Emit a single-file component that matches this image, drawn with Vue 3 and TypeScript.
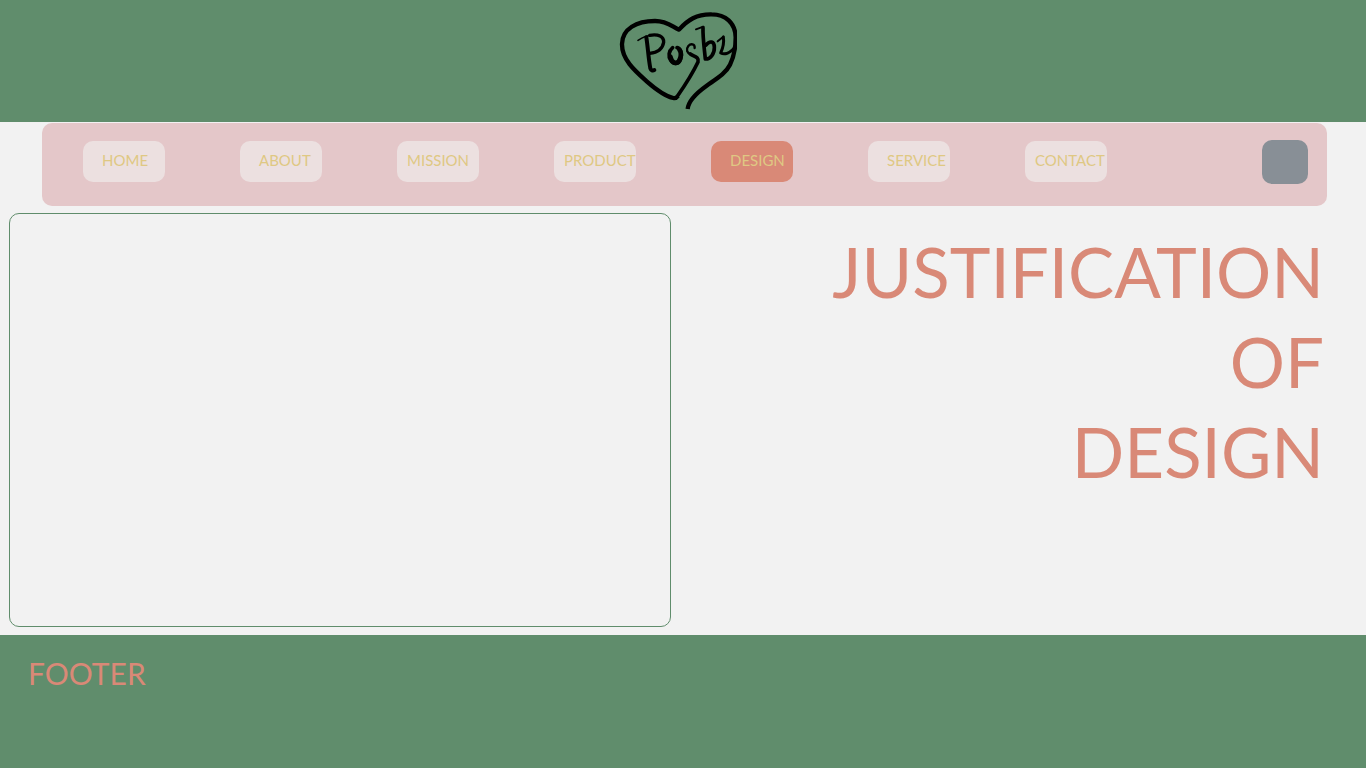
<script setup lang="ts">
interface NavItem {
  label: string
  href: string
  inset: 'near' | 'far'
  active?: boolean
}

const items: NavItem[] = [
  { label: 'HOME', href: '#home', inset: 'far' },
  { label: 'ABOUT', href: '#about', inset: 'far' },
  { label: 'MISSION', href: '#mission', inset: 'near' },
  { label: 'PRODUCT', href: '#product', inset: 'near' },
  { label: 'DESIGN', href: '#design', inset: 'far', active: true },
  { label: 'SERVICE', href: '#service', inset: 'far' },
  { label: 'CONTACT', href: '#contact', inset: 'near' },
]

const titleLines: string[] = ['JUSTIFICATION', 'OF', 'DESIGN']
</script>

<template>
  <div class="page">
    <header class="banner">
      <svg class="logo" viewBox="27 27 354 306" role="img" aria-label="Posbz">
        <g fill="none" stroke="#000" stroke-linecap="round" stroke-linejoin="round">
          <path
            stroke-width="13" stroke-linecap="butt"
            d="M233 327C235 300 262 277 290 257C320 236 346 222 360 194C372 170 377 147 377 112C376 68 346 43 305 43C260 42 233 60 207 89C188 82 174 63 135 63C80 63 37 86 36 132C35 178 74 212 110 244C142 272 171 290 190 294Q198 296 204 288"
          />
          <path stroke-width="11" d="M202 289C222 260 248 220 264 186C268 170 252 170 241 162" />
          <path stroke-width="7" d="M254 144C255 131 242 130 235 138C227 148 231 160 243 163" />
          <path stroke-width="5" d="M84 121C98 112 113 106 129 105" />
          <path stroke-width="10" d="M119 106C145 101 162 110 161 127C158 146 142 158 119 160" />
          <path stroke-width="12" d="M109 112C114 143 115 174 121 205C123 211 128 213 133 210" />
          <path stroke-width="11" d="M188 143C176 153 174 169 182 181C191 195 206 193 212 177C218 161 212 145 201 143" />
          <path stroke-width="14" d="M181 170C187 194 205 194 211 174C214 163 212 154 208 149" />
          <path stroke-width="6" d="M258 88L280 80" />
          <path stroke-width="11" d="M279 83C278 113 283 146 286 177C300 178 314 162 313 142C313 124 300 120 287 136" />
          <path stroke-width="6" d="M323 124L340 110" />
          <path stroke-width="9" d="M340 111C343 130 338 146 332 159C345 165 361 158 373 144" />
        </g>
      </svg>
    </header>

    <nav class="nav" aria-label="Main">
      <a
        v-for="item in items"
        :key="item.label"
        :href="item.href"
        class="link"
        :class="[item.inset, { active: item.active }]"
        :aria-current="item.active ? 'page' : undefined"
      >{{ item.label }}</a>
      <button class="menu" type="button" aria-label="Menu"></button>
    </nav>

    <main class="content">
      <section class="panel" aria-label="Design preview"></section>
      <h1 class="title">
        <span v-for="line in titleLines" :key="line">{{ line }}</span>
      </h1>
    </main>

    <footer class="footer">FOOTER</footer>
  </div>
</template>

<style>
body {
  margin: 0;
}
</style>

<style scoped>
.page {
  display: flex;
  flex-direction: column;
  min-height: 100vh;
  background: #f2f2f2;
  font-family: Lato, "Open Sans", sans-serif;
}

.banner {
  display: flex;
  justify-content: center;
  box-sizing: border-box;
  padding: 9px 10px 11px 0;
  background: #608d6c;
}

.logo {
  width: 118px;
  height: 102px;
}

.nav {
  display: flex;
  align-items: flex-start;
  gap: 75px;
  margin: 1px 39px 0 42px;
  padding: 17px 19px 22px 41px;
  border-radius: 10px;
  background: #e4c7c9;
}

.link {
  box-sizing: border-box;
  flex: none;
  width: 82px;
  height: 41px;
  margin-top: 1px;
  border-radius: 10px;
  background: #ece0e0;
  color: #dfc883;
  font-size: 15px;
  line-height: 38px;
  white-space: nowrap;
  text-decoration: none;
}

.near {
  padding-left: 10px;
}

.far {
  padding-left: 19px;
}

.active {
  background: #d98977;
}

.menu {
  width: 46px;
  height: 44px;
  margin-left: auto;
  padding: 0;
  border: 0;
  border-radius: 10px;
  background: #888f96;
}

.content {
  display: grid;
  grid-template-columns: 662fr 629fr;
  gap: 24px;
  padding: 7px 42px 8px 9px;
}

.panel {
  box-sizing: border-box;
  min-height: 414px;
  border: 1px solid #608d6c;
  border-radius: 10px;
}

.title {
  margin: 0;
  padding-top: 14px;
  color: #d98977;
  font-size: 69px;
  font-weight: 400;
  line-height: 90px;
  text-align: right;
}

.title span {
  display: block;
}

.footer {
  flex: 1;
  padding: 18px 28px;
  background: #608d6c;
  color: #d98977;
  font-size: 30px;
  line-height: 40px;
}
</style>
